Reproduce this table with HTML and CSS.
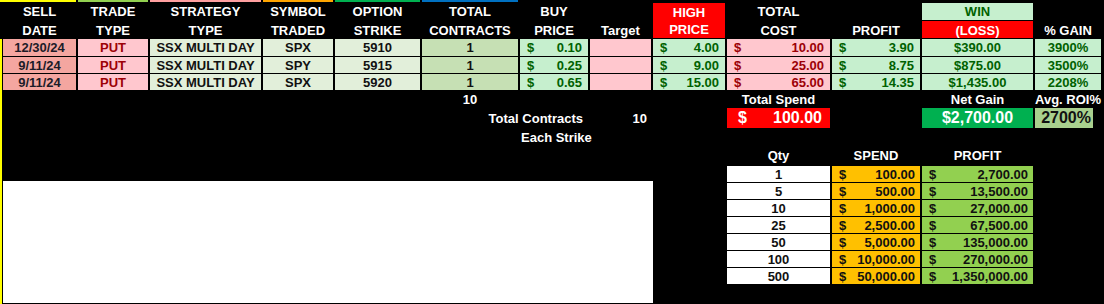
FILE: index.html
```html
<!DOCTYPE html>
<html>
<head>
<meta charset="utf-8">
<link rel="stylesheet" href="styles.css">
</head>
<body>
<div class="sheet">
  <!-- top colour strips -->
  <div class="strip yellow r0 span01"></div>
  <div class="strip lime r0 c2"></div>
  <div class="strip pink r0 c3"></div>
  <div class="strip orange r0 c4"></div>
  <div class="strip green r0 c5"></div>
  <div class="strip blue r0 c6"></div>

  <!-- left border -->
  <div class="leftbar"></div>

  <!-- header -->
  <div class="hd r1 c1">SELL</div><div class="hd r2 c1">DATE</div>
  <div class="hd r1 c2">TRADE</div><div class="hd r2 c2">TYPE</div>
  <div class="hd r1 c3">STRATEGY</div><div class="hd r2 c3">TYPE</div>
  <div class="hd r1 c4">SYMBOL</div><div class="hd r2 c4">TRADED</div>
  <div class="hd r1 c5">OPTION</div><div class="hd r2 c5">STRIKE</div>
  <div class="hd r1 c6">TOTAL</div><div class="hd r2 c6">CONTRACTS</div>
  <div class="hd r1 c7">BUY</div><div class="hd r2 c7">PRICE</div>
  <div class="hd r2 c8">Target</div>
  <div class="hd hd-red r12 c9 twoline"><span>HIGH</span><span>PRICE</span></div>
  <div class="hd r1 c10">TOTAL</div><div class="hd r2 c10">COST</div>
  <div class="hd r2 c11">PROFIT</div>
  <div class="hd hd-win r1 c12">WIN</div><div class="hd hd-red r2 c12">(LOSS)</div>
  <div class="hd r2 c13">% GAIN</div>

  <!-- row 1 -->
  <div class="cell date r3 c1">12/30/24</div>
  <div class="cell bad r3 c2">PUT</div>
  <div class="cell pale r3 c3">SSX MULTI DAY</div>
  <div class="cell pale r3 c4">SPX</div>
  <div class="cell pale r3 c5">5910</div>
  <div class="cell qty r3 c6">1</div>
  <div class="cell good money r3 c7"><span>$</span><span>0.10</span></div>
  <div class="cell bad r3 c8"></div>
  <div class="cell good money r3 c9"><span>$</span><span>4.00</span></div>
  <div class="cell bad money r3 c10"><span>$</span><span>10.00</span></div>
  <div class="cell good money r3 c11"><span>$</span><span>3.90</span></div>
  <div class="cell good r3 c12">$390.00</div>
  <div class="cell good r3 c13">3900%</div>

  <!-- row 2 -->
  <div class="cell date r4 c1">9/11/24</div>
  <div class="cell bad r4 c2">PUT</div>
  <div class="cell pale r4 c3">SSX MULTI DAY</div>
  <div class="cell pale r4 c4">SPY</div>
  <div class="cell pale r4 c5">5915</div>
  <div class="cell qty r4 c6">1</div>
  <div class="cell good money r4 c7"><span>$</span><span>0.25</span></div>
  <div class="cell bad r4 c8"></div>
  <div class="cell good money r4 c9"><span>$</span><span>9.00</span></div>
  <div class="cell bad money r4 c10"><span>$</span><span>25.00</span></div>
  <div class="cell good money r4 c11"><span>$</span><span>8.75</span></div>
  <div class="cell good r4 c12">$875.00</div>
  <div class="cell good r4 c13">3500%</div>

  <!-- row 3 -->
  <div class="cell date r5 c1">9/11/24</div>
  <div class="cell bad r5 c2">PUT</div>
  <div class="cell pale r5 c3">SSX MULTI DAY</div>
  <div class="cell pale r5 c4">SPX</div>
  <div class="cell pale r5 c5">5920</div>
  <div class="cell qty r5 c6">1</div>
  <div class="cell good money r5 c7"><span>$</span><span>0.65</span></div>
  <div class="cell bad r5 c8"></div>
  <div class="cell good money r5 c9"><span>$</span><span>15.00</span></div>
  <div class="cell bad money r5 c10"><span>$</span><span>65.00</span></div>
  <div class="cell good money r5 c11"><span>$</span><span>14.35</span></div>
  <div class="cell good r5 c12">$1,435.00</div>
  <div class="cell good r5 c13">2208%</div>

  <!-- totals -->
  <div class="lbl r6 c6">10</div>
  <div class="lbl r6 c10">Total Spend</div>
  <div class="lbl r6 c12">Net Gain</div>
  <div class="lbl r6 c13">Avg. ROI%</div>

  <div class="lbl right r7 c7">Total Contracts</div>
  <div class="lbl right pr4 r7 c8">10</div>
  <div class="big spend r7 c10"><span>$</span><span>100.00</span></div>
  <div class="big net r7 c12">$2,700.00</div>
  <div class="big roi r7 c13">2700%</div>

  <div class="lbl left r8 c7">Each Strike</div>

  <!-- qty table -->
  <div class="lbl r9 c10">Qty</div>
  <div class="lbl r9 c11">SPEND</div>
  <div class="lbl r9 c12">PROFIT</div>

  <div class="q qn q1 c10">1</div><div class="q qs money q1 c11"><span>$</span><span>100.00</span></div><div class="q qp money q1 c12"><span>$</span><span>2,700.00</span></div>
  <div class="q qn q2 c10">5</div><div class="q qs money q2 c11"><span>$</span><span>500.00</span></div><div class="q qp money q2 c12"><span>$</span><span>13,500.00</span></div>
  <div class="q qn q3 c10">10</div><div class="q qs money q3 c11"><span>$</span><span>1,000.00</span></div><div class="q qp money q3 c12"><span>$</span><span>27,000.00</span></div>
  <div class="q qn q4 c10">25</div><div class="q qs money q4 c11"><span>$</span><span>2,500.00</span></div><div class="q qp money q4 c12"><span>$</span><span>67,500.00</span></div>
  <div class="q qn q5 c10">50</div><div class="q qs money q5 c11"><span>$</span><span>5,000.00</span></div><div class="q qp money q5 c12"><span>$</span><span>135,000.00</span></div>
  <div class="q qn q6 c10">100</div><div class="q qs money q6 c11"><span>$</span><span>10,000.00</span></div><div class="q qp money q6 c12"><span>$</span><span>270,000.00</span></div>
  <div class="q qn q7 c10">500</div><div class="q qs money q7 c11"><span>$</span><span>50,000.00</span></div><div class="q qp money q7 c12"><span>$</span><span>1,350,000.00</span></div>

  <!-- blank white area -->
  <div class="blank"></div>
</div>
</body>
</html>
```

FILE: styles.css
```css
html, body {
  margin: 0;
  padding: 0;
  background: #000;
}

body {
  width: 1104px;
  height: 304px;
  overflow: hidden;
  font-family: "Liberation Sans", Arial, sans-serif;
  font-weight: bold;
  font-size: 13px;
}

.sheet {
  display: grid;
  grid-template-columns: 1px 73px 70px 111px 70px 85px 96px 68px 61px 72px 103px 88px 111px 66px;
  grid-template-rows: 2px 17px 17px 17px 16px 16px 16px 20px 16px 19px repeat(7, 16px) 1fr;
  column-gap: 2px;
  row-gap: 1px;
  height: 304px;
}

/* rows */
.r0 { grid-row: 1; }
.r1 { grid-row: 2; }
.r2 { grid-row: 3; }
.r12 { grid-row: 2 / 4; }
.r3 { grid-row: 4; }
.r4 { grid-row: 5; }
.r5 { grid-row: 6; }
.r6 { grid-row: 7; }
.r7 { grid-row: 8; }
.r8 { grid-row: 9; }
.r9 { grid-row: 10; }
.q1 { grid-row: 11; }
.q2 { grid-row: 12; }
.q3 { grid-row: 13; }
.q4 { grid-row: 14; }
.q5 { grid-row: 15; }
.q6 { grid-row: 16; }
.q7 { grid-row: 17; }

/* columns */
.span01 { grid-column: 1 / 3; }
.c1 { grid-column: 2; }
.c2 { grid-column: 3; }
.c3 { grid-column: 4; }
.c4 { grid-column: 5; }
.c5 { grid-column: 6; }
.c6 { grid-column: 7; }
.c7 { grid-column: 8; }
.c8 { grid-column: 9; }
.c9 { grid-column: 10; }
.c10 { grid-column: 11; }
.c11 { grid-column: 12; }
.c12 { grid-column: 13; }
.c13 { grid-column: 14; }

/* colour strips along the top */
.strip.yellow { background: #ffff00; }
.strip.lime { background: #92d050; }
.strip.pink { background: #ff9f9f; }
.strip.orange { background: #ffa500; }
.strip.green { background: #00b050; }
.strip.blue { background: #0070c0; }

.leftbar {
  grid-column: 1;
  grid-row: 4 / 19;
  width: 2px;
  background: #ffff00;
}

/* header */
.hd {
  color: #fff;
  display: flex;
  align-items: center;
  justify-content: center;
  white-space: nowrap;
  line-height: 1;
}
.hd.r2 { padding-top: 2px; }
.hd-red { background: #ff0000; }
.hd-win { background: #c6efce; color: #006100; }
.twoline {
  flex-direction: column;
  justify-content: space-around;
  padding: 1px 0 0;
}
.twoline span { display: block; }

/* data cells */
.cell {
  display: flex;
  align-items: center;
  justify-content: center;
  white-space: nowrap;
  color: #111;
  line-height: 1;
}
.date { background: #f4a6a0; color: #1c1c28; }
.pale { background: #e2efda; }
.qty { background: #c6e0b4; }
.good { background: #c6efce; color: #006100; }
.bad { background: #ffc7ce; color: #9c0006; }

.money {
  justify-content: space-between;
  padding: 0 6px 0 7px;
}

/* loose labels */
.lbl {
  color: #fff;
  display: flex;
  align-items: center;
  justify-content: center;
  white-space: nowrap;
  line-height: 1;
}
.lbl.right { justify-content: flex-end; padding-right: 5px; }
.lbl.pr4 { padding-right: 4px; }
.lbl.left { justify-content: flex-start; padding-left: 1px; }

/* big summary boxes */
.big {
  font-size: 16px;
  display: flex;
  align-items: center;
  white-space: nowrap;
  line-height: 1;
}
.spend {
  background: #ff0000;
  color: #fff;
  justify-content: space-between;
  padding: 0 8px 0 11px;
}
.net {
  background: #00b050;
  color: #fff;
  justify-content: center;
}
.roi {
  background: #a9d08e;
  color: #111;
  justify-content: flex-end;
  padding-right: 2px;
  margin-right: 8px;
}

/* qty table */
.q {
  display: flex;
  align-items: center;
  white-space: nowrap;
  color: #111;
  line-height: 1;
}
.qn { background: #fff; justify-content: center; }
.qs { background: #ffc000; }
.qp { background: #92d050; }
.q.money { padding: 0 5px 0 7px; }

/* blank white area */
.blank {
  grid-column: 2 / 10;
  grid-row: 11 / 19;
  background: #fff;
  margin-top: 15px;
  margin-bottom: 1px;
  margin-right: -2px;
}
```
